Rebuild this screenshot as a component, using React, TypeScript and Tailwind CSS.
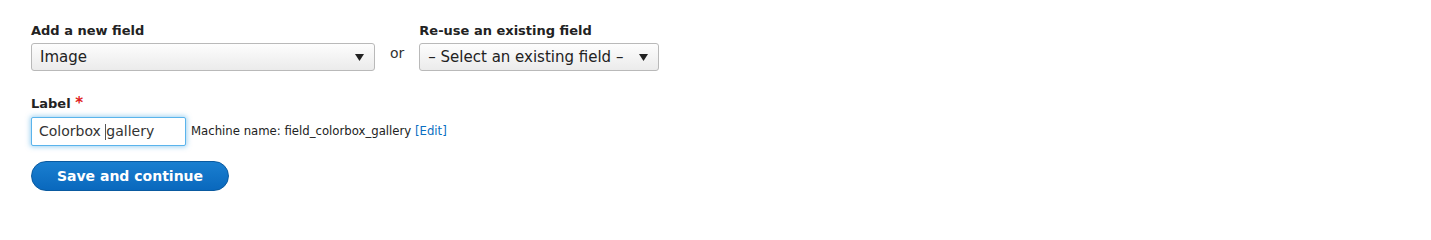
import React from 'react';

function SelectBox({ value, width }: { value: string; width: string }) {
  return (
    <div
      className={`${width} h-[28px] flex items-center justify-between pl-[8px] pr-[10px] border border-[#b9b9b9] rounded-[3px] bg-gradient-to-b from-[#fdfdfd] to-[#ebebeb] text-[15px] text-[#222]`}
    >
      <span>{value}</span>
      <svg width="9" height="7" viewBox="0 0 9 7" className="shrink-0">
        <path d="M0 0 H9 L4.5 7 Z" fill="#222" />
      </svg>
    </div>
  );
}

export default function App() {
  return (
    <div className="min-h-[227px] bg-white pl-[31px] pt-[22px] font-['DejaVu_Sans',sans-serif] text-[#222]">
      <div className="flex items-end">
        <div className="flex flex-col">
          <label className="text-[13px] font-bold leading-[18px] mb-[3px]">Add a new field</label>
          <SelectBox value="Image" width="w-[344px]" />
        </div>
        <span className="mx-[15px] mb-[7px] text-[14px] text-[#333]">or</span>
        <div className="flex flex-col">
          <label className="text-[13px] font-bold leading-[18px] mb-[3px]">Re-use an existing field</label>
          <SelectBox value="– Select an existing field –" width="w-[240px]" />
        </div>
      </div>

      <div className="mt-[23px] flex flex-col items-start">
        <label className="text-[13px] font-bold leading-[18px] mb-[4px]">
          Label <span className="text-[#e02020] text-[15px]">*</span>
        </label>
        <div className="flex items-center">
          <div className="w-[155px] h-[29px] flex items-center pl-[7px] border border-[#5ab4ec] rounded-[2px] shadow-[0_0_5px_1px_rgba(64,166,230,0.5)] text-[14px] text-[#333] bg-white">
            Colorbox{'\u00a0'}<span className="border-l border-[#555] h-[16px]"></span>gallery
          </div>
          <span className="ml-[5px] text-[11.7px] text-[#222]">
            Machine name: field_colorbox_gallery{' '}
            <a href="#" className="text-[#0a6fc2]">[Edit]</a>
          </span>
        </div>
        <button className="mt-[15px] w-[198px] h-[30px] rounded-full border border-[#0a5aa0] bg-gradient-to-b from-[#1a7fd0] to-[#0968bd] text-white text-[14px] font-bold leading-none">
          Save and continue
        </button>
      </div>
    </div>
  );
}
